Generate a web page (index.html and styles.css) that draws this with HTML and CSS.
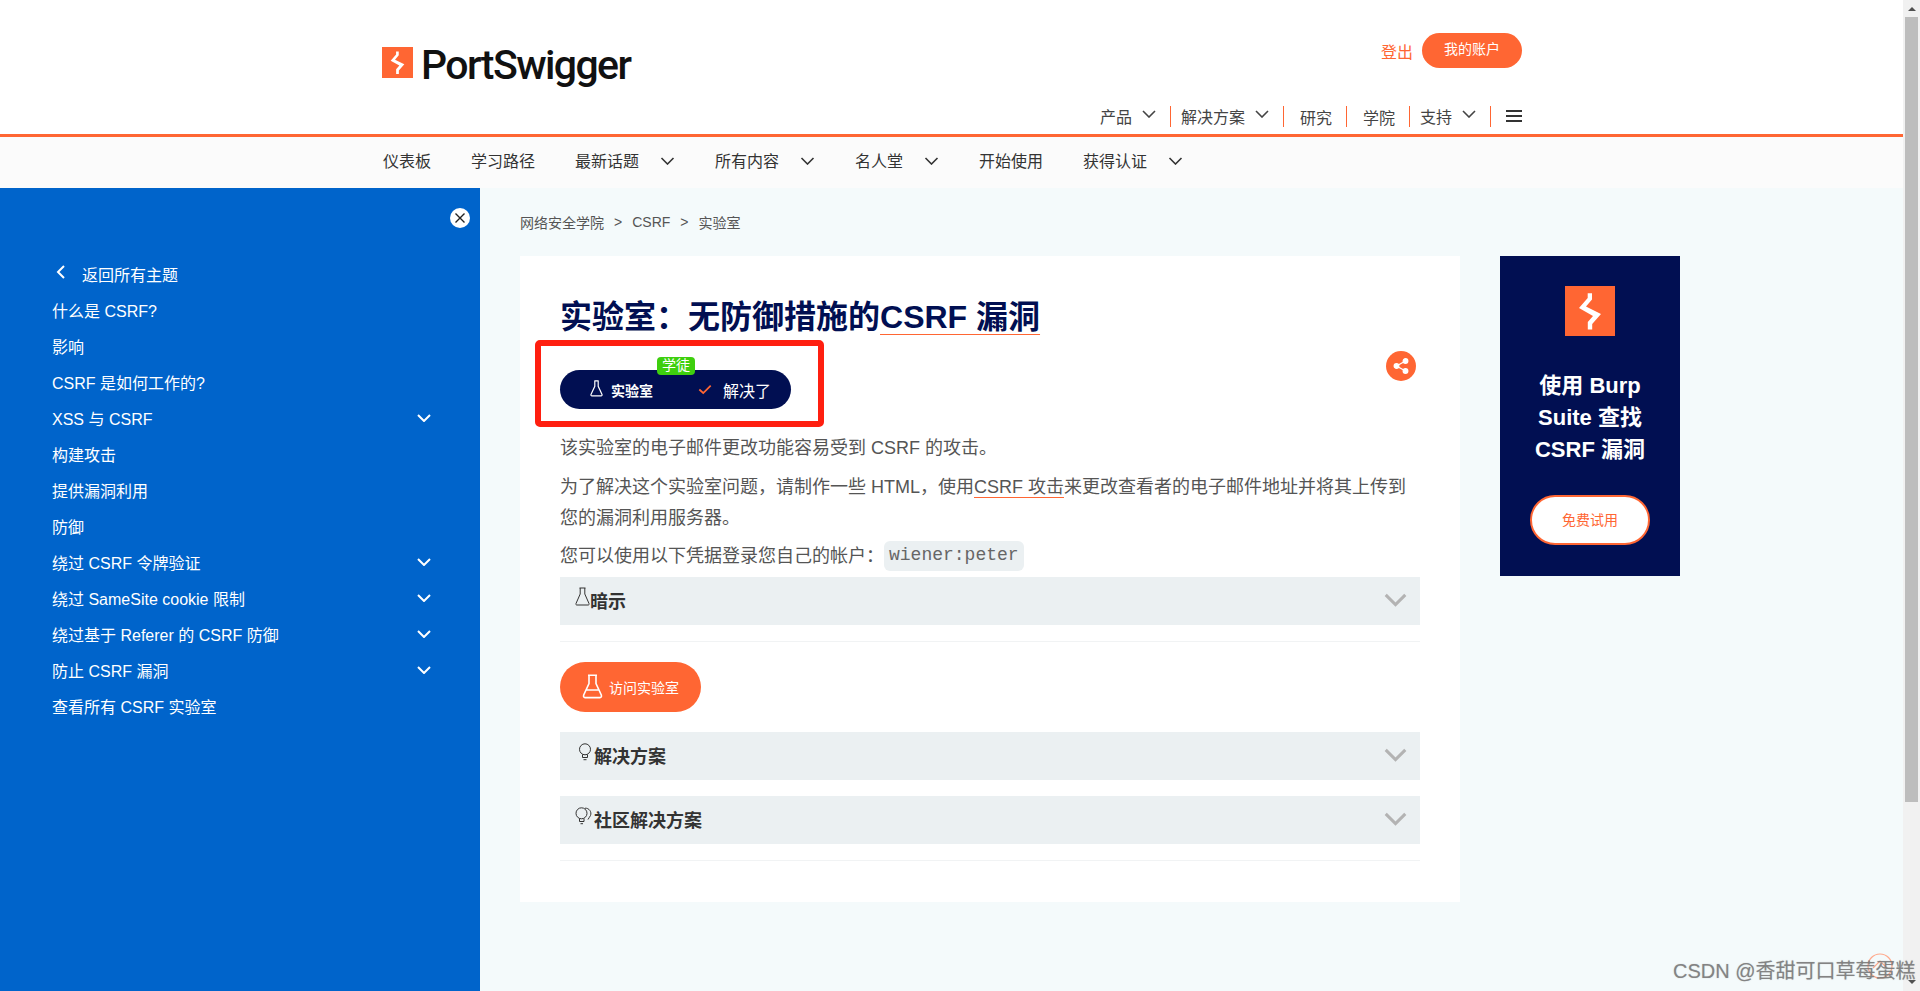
FILE: index.html
```html
<!DOCTYPE html>
<html lang="zh-CN">
<head>
<meta charset="utf-8">
<title>实验室&#xFF1A;无防御措施的CSRF 漏洞</title>
<link rel="stylesheet" href="styles.css">
</head>
<body>
<div class="window">
  <div class="page">
    <header class="header">
      <a class="logo">
        <svg class="logo-mark" viewBox="0 0 50 50"><rect width="50" height="50" fill="#ff6633"/><path d="M22.7 7.3H27V13.5L21 20.5L36 28L27.2 38V43.5H22.8V36L28 30L14 22L22.7 12Z" fill="#fff"/></svg>
        <span class="logo-text">PortSwigger</span>
      </a>
      <div class="header-right">
        <div class="account">
          <a class="logout">登出</a>
          <a class="account-btn">我的账户</a>
        </div>
        <nav class="topnav">
          <a class="topnav-item">产品<svg class="chev-top" viewBox="0 0 14 8"><path d="M1 1L7 7L13 1"/></svg></a>
          <a class="topnav-item">解决方案<svg class="chev-top" viewBox="0 0 14 8"><path d="M1 1L7 7L13 1"/></svg></a>
          <a class="topnav-item plain">研究</a>
          <a class="topnav-item plain">学院</a>
          <a class="topnav-item">支持<svg class="chev-top" viewBox="0 0 14 8"><path d="M1 1L7 7L13 1"/></svg></a>
          <a class="burger"><i></i><i></i><i></i></a>
        </nav>
      </div>
    </header>
    <nav class="subnav">
      <a class="subnav-item">仪表板</a>
      <a class="subnav-item">学习路径</a>
      <a class="subnav-item">最新话题<svg class="chev-sub" viewBox="0 0 14 8"><path d="M1 1L7 7L13 1"/></svg></a>
      <a class="subnav-item">所有内容<svg class="chev-sub" viewBox="0 0 14 8"><path d="M1 1L7 7L13 1"/></svg></a>
      <a class="subnav-item">名人堂<svg class="chev-sub" viewBox="0 0 14 8"><path d="M1 1L7 7L13 1"/></svg></a>
      <a class="subnav-item">开始使用</a>
      <a class="subnav-item">获得认证<svg class="chev-sub" viewBox="0 0 14 8"><path d="M1 1L7 7L13 1"/></svg></a>
    </nav>
    <div class="layout">
      <aside class="sidebar">
        <div class="side-close-row">
          <span class="side-close"><svg viewBox="0 0 20 20"><path d="M5.5 5.5L14.5 14.5M14.5 5.5L5.5 14.5"/></svg></span>
        </div>
        <ul class="side-list">
          <li class="side-back"><svg viewBox="0 0 10 14"><path d="M8 1L2 7L8 13"/></svg>返回所有主题</li>
          <li>什么是 CSRF?</li>
          <li>影响</li>
          <li>CSRF 是如何工作的?</li>
          <li>XSS 与 CSRF<svg class="chev-side" viewBox="0 0 14 8"><path d="M1 1L7 7L13 1"/></svg></li>
          <li>构建攻击</li>
          <li>提供漏洞利用</li>
          <li>防御</li>
          <li>绕过 CSRF 令牌验证<svg class="chev-side" viewBox="0 0 14 8"><path d="M1 1L7 7L13 1"/></svg></li>
          <li>绕过 SameSite cookie 限制<svg class="chev-side" viewBox="0 0 14 8"><path d="M1 1L7 7L13 1"/></svg></li>
          <li>绕过基于 Referer 的 CSRF 防御<svg class="chev-side" viewBox="0 0 14 8"><path d="M1 1L7 7L13 1"/></svg></li>
          <li>防止 CSRF 漏洞<svg class="chev-side" viewBox="0 0 14 8"><path d="M1 1L7 7L13 1"/></svg></li>
          <li>查看所有 CSRF 实验室</li>
        </ul>
      </aside>
      <main class="content">
        <div class="breadcrumb"><a>网络安全学院</a><span>&gt;</span><a>CSRF</a><span>&gt;</span><a>实验室</a></div>
        <div class="columns">
          <article class="card">
            <h1 class="title">实验室&#xFF1A;无防御措施的<a class="title-link">CSRF 漏洞</a></h1>
            <div class="status-row">
              <div class="status">
                <span class="level">学徒</span>
                <span class="status-lab"><svg class="flask-s" viewBox="0 0 16 20"><path d="M5.5 1H10.5M6 1V7.5L1.5 17C1.2 18 1.7 18.7 2.6 18.7H13.4C14.3 18.7 14.8 18 14.5 17L10 7.5V1"/></svg>实验室</span>
                <span class="status-solved"><svg class="check" viewBox="0 0 16 12"><path d="M1.5 6L6 10L14.5 1.5"/></svg>解决了</span>
              </div>
              <a class="share"><svg viewBox="0 0 20 20"><path d="M14.5 5L5.5 10L14.5 15"/><circle cx="14.5" cy="5" r="2.3"/><circle cx="5.5" cy="10" r="2.3"/><circle cx="14.5" cy="15" r="2.3"/></svg></a>
            </div>
            <p class="para first">该实验室的电子邮件更改功能容易受到 CSRF 的攻击。</p>
            <p class="para second">为了解决这个实验室问题&#xFF0C;请制作一些 HTML&#xFF0C;使用<a class="inline-link">CSRF 攻击</a>来更改查看者的电子邮件地址并将其上传到您的漏洞利用服务器。</p>
            <p class="para">您可以使用以下凭据登录您自己的帐户&#xFF1A;<code class="chip">wiener:peter</code></p>
            <div class="accordion acc-hint">
              <svg class="acc-icon flask-a" viewBox="0 0 15 19"><path d="M4.5 1H10.5M5.2 1V7L1 16.5C.6 17.6 1.1 18 2 18H13C13.9 18 14.4 17.6 14 16.5L9.8 7V1"/></svg>
              <span class="acc-label">暗示</span>
              <svg class="acc-chev" viewBox="0 0 24 15"><path d="M1.5 2L12 12.5L22.5 2"/></svg>
            </div>
            <hr class="rule">
            <a class="access"><svg class="flask-b" viewBox="0 0 21 25"><path d="M6 1.2H15M7 1.2V9.5L1.7 21C1.2 22.6 1.9 23.6 3 23.6H18C19.1 23.6 19.8 22.6 19.3 21L14 9.5V1.2M4.5 16H16.5"/></svg>访问实验室</a>
            <div class="accordion acc-solution">
              <svg class="acc-icon bulb" viewBox="0 0 14 18"><circle cx="7" cy="6.3" r="5.5"/><path d="M4.5 11.5V14.5H9.5V11.5M5.5 16.7H8.5"/></svg>
              <span class="acc-label">解决方案</span>
              <svg class="acc-chev" viewBox="0 0 24 15"><path d="M1.5 2L12 12.5L22.5 2"/></svg>
            </div>
            <div class="accordion acc-community">
              <svg class="acc-icon bulbs" viewBox="0 0 17 18"><circle cx="6.5" cy="6.3" r="5.5"/><path d="M4.5 11.5V14.5H9V11.5M5.5 16.7H8M10 1.2C14 .8 17 5 15.5 8.5C15 10 13.5 11 13 12.5"/></svg>
              <span class="acc-label">社区解决方案</span>
              <svg class="acc-chev" viewBox="0 0 24 15"><path d="M1.5 2L12 12.5L22.5 2"/></svg>
            </div>
            <hr class="rule">
          </article>
          <aside class="ad">
            <svg class="ad-mark" viewBox="0 0 50 50"><rect width="50" height="50" fill="#ff6633"/><path d="M22.7 7.3H27V13.5L21 20.5L36 28L27.2 38V43.5H22.8V36L28 30L14 22L22.7 12Z" fill="#fff"/></svg>
            <div class="ad-text">使用 Burp Suite 查找 CSRF 漏洞</div>
            <a class="ad-btn">免费试用</a>
          </aside>
        </div>
      </main>
    </div>
  </div>
  <div class="scrollbar">
    <span class="arrow-up"></span>
    <span class="thumb"></span>
    <span class="arrow-down"></span>
  </div>
</div>
<div class="annotation"></div>
<div class="to-top"><svg viewBox="0 0 26 26"><circle cx="13" cy="13" r="12"/><path d="M6 15L13 8L20 15"/></svg></div>
<div class="watermark">CSDN @香甜可口草莓蛋糕</div>
</body>
</html>
```

FILE: styles.css
```css
* { box-sizing: border-box; }
html, body { margin: 0; height: 100%; overflow: hidden; }
body {
  position: relative;
  font-family: "Liberation Sans", "Noto Sans CJK SC", sans-serif;
  font-size: 16px;
  color: #333;
  background: #fff;
}
a { color: inherit; text-decoration: none; }
.window { display: flex; height: 991px; }
.page { flex: 1; min-width: 0; display: flex; flex-direction: column; }

/* header */
.header {
  height: 137px;
  flex: none;
  display: flex;
  justify-content: space-between;
  padding: 0 381px 0 382px;
  background: #fff;
  border-bottom: 3px solid #ff6633;
}
.logo { display: flex; align-items: flex-start; padding-top: 47px; }
.logo-mark { width: 31px; height: 31px; }
.logo-text {
  font-family: Roboto, "Liberation Sans", sans-serif;
  font-size: 41px;
  font-weight: 500;
  line-height: 36px;
  letter-spacing: -1.6px;
  color: #111;
  margin-left: 8px;
}
.header-right { display: flex; flex-direction: column; align-items: flex-end; }
.account { display: flex; align-items: center; margin-top: 33px; height: 35px; }
.logout { color: #ff6633; margin-right: 9px; }
.account-btn {
  width: 100px;
  height: 35px;
  line-height: 33px;
  text-align: center;
  font-size: 14px;
  color: #fff;
  background: #ff6633;
  border-radius: 18px;
}
.topnav { display: flex; align-items: flex-start; margin-top: 38px; height: 21px; }
.topnav-item {
  display: flex;
  align-items: flex-start;
  height: 21px;
  line-height: 24px;
  padding: 0 14px 0 10px;
  border-right: 1px solid #ff6633;
  color: #444;
}
.topnav-item.plain { padding: 0 14px 0 16px; line-height: 26px; }
.chev-top { width: 14px; height: 8px; margin: 4px 0 0 10px; fill: none; stroke: #444; stroke-width: 1.6; }
.burger { display: flex; flex-direction: column; justify-content: space-between; width: 16px; height: 12px; margin: 4px 0 0 15px; }
.burger i { display: block; height: 2px; background: #333; }

/* sub nav */
.subnav {
  height: 51px;
  flex: none;
  display: flex;
  align-items: center;
  gap: 40px;
  padding: 0 0 2px 383px;
  background: #fbfbfb;
  color: #333;
}
.subnav-item { display: flex; align-items: center; line-height: 20px; }
.chev-sub { width: 15px; height: 8px; margin: 0 0 1px 21px; fill: none; stroke: #333; stroke-width: 1.6; }

/* layout */
.layout { flex: 1; display: flex; min-height: 0; }
.sidebar { width: 480px; flex: none; background: #0064cb; color: #fff; padding-top: 20px; }
.side-close-row { display: flex; justify-content: flex-end; padding-right: 10px; }
.side-close { width: 20px; height: 20px; border-radius: 50%; background: #fff; display: block; }
.side-close svg { display: block; width: 20px; height: 20px; fill: none; stroke: #222; stroke-width: 1.4; }
.side-list { list-style: none; margin: 28px 0 0; padding: 0 0 0 52px; }
.side-list li { display: flex; align-items: center; height: 36px; padding-right: 49px; }
.side-back svg { width: 10px; height: 14px; margin: -4px 16px 0 4px; fill: none; stroke: #fff; stroke-width: 2; }
.chev-side { width: 14px; height: 8px; margin-left: auto; fill: none; stroke: #fff; stroke-width: 2; }

.content { flex: 1; min-width: 0; background: #f4fafb; padding: 0 0 0 40px; }
.breadcrumb { display: flex; align-items: center; height: 68px; font-size: 14px; color: #555; gap: 10px; }
.columns { display: flex; align-items: flex-start; gap: 40px; }
.card { width: 940px; height: 646px; background: #fff; padding: 41px 40px 0; }
.title {
  margin: 0;
  font-size: 32px;
  line-height: 40px;
  font-weight: 700;
  color: #010f52;
  white-space: nowrap;
}
.title-link { text-decoration: underline; text-decoration-color: #ff6633; text-decoration-thickness: 1px; text-underline-offset: 6px; }
.status-row { display: flex; justify-content: space-between; align-items: flex-start; margin-top: 14px; padding-right: 4px; }
.status {
  position: relative;
  display: flex;
  align-items: center;
  width: 231px;
  height: 39px;
  margin-top: 19px;
  background: #010f52;
  border-radius: 20px;
  color: #fff;
}
.level {
  position: absolute;
  left: 97px;
  top: -13px;
  width: 38px;
  height: 18px;
  line-height: 17px;
  text-align: center;
  font-size: 14px;
  color: #fff;
  background: #3ecf0e;
  border-radius: 4px;
}
.status-lab { display: flex; align-items: center; flex: none; font-size: 14px; font-weight: 700; margin-left: 29px; width: 109px; }
.flask-s { width: 15px; height: 17px; margin: -3px 7px 0 0; fill: none; stroke: #fff; stroke-width: 1.4; }
.status-solved { display: flex; align-items: center; flex: none; font-size: 16px; }
.check { width: 14px; height: 11px; margin-right: 11px; fill: none; stroke: #ff6633; stroke-width: 2; }
.share { width: 30px; height: 30px; border-radius: 50%; background: #ff6633; display: flex; align-items: center; justify-content: center; }
.share svg { width: 20px; height: 20px; fill: #fff; stroke: #fff; stroke-width: 1.3; }
.share svg path { fill: none; }
.para { margin: 7px 0 0; font-size: 18px; line-height: 31px; color: #555; }
.para.first { margin-top: 24px; }
.para.second { margin-top: 8px; }
.inline-link { border-bottom: 1px solid #ff6633; }
.chip {
  display: inline-block;
  height: 30px;
  line-height: 29px;
  padding: 0 5px;
  font-family: "Liberation Mono", monospace;
  font-size: 18px;
  color: #666;
  background: #ebf0f2;
  border-radius: 6px;
  vertical-align: top;
}
.accordion { display: flex; align-items: center; height: 48px; background: #ebf0f2; padding: 0 13px 2px 15px; }
.acc-hint { margin-top: 5px; }
.acc-solution { margin-top: 20px; }
.acc-community { margin-top: 16px; }
.acc-label { font-size: 18px; font-weight: 700; color: #333; }
.acc-icon { fill: none; stroke: #333; stroke-width: 1; margin-top: -8px; }
.flask-a { width: 15px; height: 19px; margin-right: 0; }
.bulb { width: 14px; height: 18px; margin: -6px 2px 0 3px; }
.bulbs { width: 17px; height: 18px; margin: -6px 2px 0 0; }
.acc-chev { width: 23px; height: 14px; margin-left: auto; fill: none; stroke: #b3b3b3; stroke-width: 3.2; }
.rule { height: 1px; margin: 16px 0 0; border: 0; background: #f1f3f4; }
.access {
  display: flex;
  align-items: center;
  width: 141px;
  height: 50px;
  margin-top: 20px;
  padding: 0 0 1px 22px;
  font-size: 14px;
  color: #fff;
  background: #ff6633;
  border-radius: 25px;
}
.flask-b { width: 21px; height: 25px; margin-right: 6px; fill: none; stroke: #fff; stroke-width: 1.6; }

/* ad */
.ad { width: 180px; height: 320px; background: #010f52; display: flex; flex-direction: column; align-items: center; padding-top: 30px; }
.ad-mark { width: 50px; height: 50px; flex: none; }
.ad-text { width: 130px; margin-top: 34px; font-size: 22px; line-height: 32px; font-weight: 700; text-align: center; color: #fff; }
.ad-btn {
  width: 120px;
  height: 50px;
  margin-top: 29px;
  line-height: 47px;
  text-align: center;
  font-size: 14px;
  color: #ff6633;
  background: #fff;
  border: 2px solid #ff6633;
  border-radius: 25px;
}

/* scrollbar */
.scrollbar { width: 17px; flex: none; background: #f1f1f1; display: flex; flex-direction: column; align-items: center; position: relative; }
.arrow-up { width: 0; height: 0; margin-top: 7px; border: 4px solid transparent; border-top: 0; border-bottom: 4px solid #505050; }
.thumb { width: 13px; height: 785px; margin-top: 6px; background: #bdbdbd; }
.arrow-down { width: 0; height: 0; margin-top: auto; margin-bottom: 7px; border: 4px solid transparent; border-bottom: 0; border-top: 4px solid #505050; }

/* overlays */
.annotation {
  position: absolute;
  left: 535px;
  top: 340px;
  width: 289px;
  height: 87px;
  border: 6px solid #ff1f10;
  border-radius: 5px;
}
.to-top { position: absolute; left: 1867px; top: 953px; width: 26px; height: 26px; }
.to-top svg { display: block; width: 26px; height: 26px; fill: none; stroke: #ffa98c; stroke-width: 1.2; }
.watermark {
  position: absolute;
  left: 1673px;
  top: 956px;
  font-size: 20px;
  line-height: 30px;
  color: rgba(120, 120, 120, .85);
  white-space: nowrap;
  text-shadow: 0 0 1px rgba(120, 120, 120, .5);
}
```
